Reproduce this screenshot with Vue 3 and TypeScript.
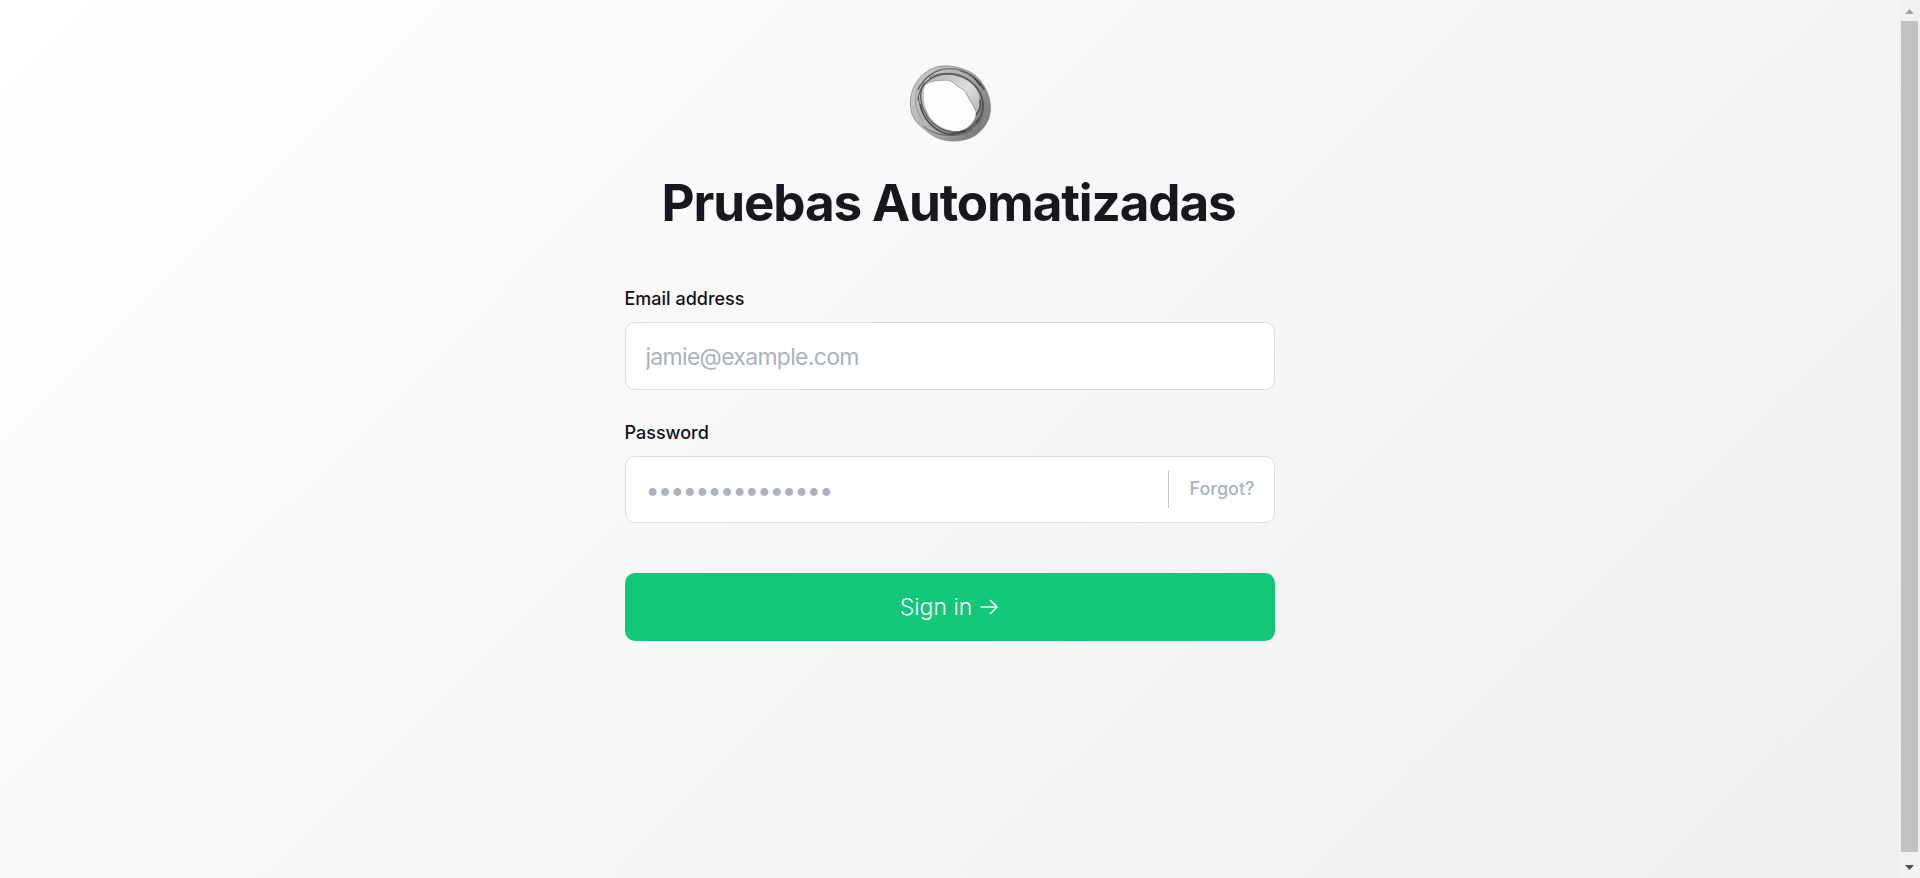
<script setup lang="ts">
import { ref } from 'vue'

const title = 'Pruebas Automatizadas'
const email = ref('')
const password = ref('')
const mask = '•'.repeat(15)
</script>

<template>
  <div class="screen">
    <main class="page">
      <svg class="logo" viewBox="0 0 360 330" aria-hidden="true">
        <defs>
          <linearGradient id="ringShade" x1="0" y1="0" x2="1" y2="0.6">
            <stop offset="0" stop-color="#cecece" />
            <stop offset="0.5" stop-color="#b4b4b4" />
            <stop offset="1" stop-color="#7c7c7c" />
          </linearGradient>
          <linearGradient id="veilShade" x1="0" y1="0" x2="1" y2="1">
            <stop offset="0" stop-color="#b4b4b4" />
            <stop offset="0.55" stop-color="#dedede" />
            <stop offset="1" stop-color="#b4b4b4" />
          </linearGradient>
        </defs>
        <path fill="url(#ringShade)" d="M150 49C180 44 212 53 236 64C262 77 276 94 287 118C298 136 303 162 301 184C298 216 278 242 253 258C231 271 203 275 175 272C147 269 126 258 106 240C86 226 67 206 63 181C58 155 62 125 76 103C92 74 118 54 150 49Z" />
        <path fill="url(#veilShade)" d="M112 94C135 71 178 67 215 80C249 94 267 123 270 151C272 168 267 180 258 190Z" />
        <path fill="#fdfdfd" d="M108 103C96 128 100 163 113 188C119 203 126 212 140 222C156 236 178 243 198 243C220 244 240 230 252 209C259 197 259 188 254 177C245 159 236 147 230 134C224 119 214 116 202 108C191 99 186 92 170 91C148 90 120 91 108 103Z" />
        <g fill="none" stroke-linecap="round">
          <path stroke="#7c7c7c" stroke-width="2" d="M150 49C180 44 212 53 236 64C262 77 276 94 287 118C298 136 303 162 301 184C298 216 278 242 253 258C231 271 203 275 175 272C147 269 126 258 106 240C86 226 67 206 63 181C58 155 62 125 76 103C92 74 118 54 150 49Z" />
          <path stroke="#404040" stroke-width="4" opacity=".8" d="M84 119C102 83 134 59 172 56C214 54 252 75 270 106" />
          <path stroke="#404040" stroke-width="4" opacity=".75" d="M84 150C86 104 127 73 171 72C219 72 253 98 271 129C283 159 278 192 260 219" />
          <path stroke="#484848" stroke-width="3" opacity=".75" d="M118 83C157 62 207 66 239 91C268 115 285 147 280 182C275 213 252 238 219 247" />
          <path stroke="#404040" stroke-width="4" opacity=".75" d="M103 99C87 126 91 158 103 184C118 218 151 243 189 247C221 249 249 233 265 206" />
          <path stroke="#363636" stroke-width="5" opacity=".75" d="M91 164C97 204 130 239 166 250C180 255 207 252 224 244M210 61C240 69 265 89 282 118M270 150C273 166 270 181 259 193" />
          <path stroke="#444444" stroke-width="3" opacity=".7" d="M86 144C90 186 112 220 143 239M101 229C129 252 166 260 202 255C218 254 232 249 246 239" />
          <path stroke="#929292" stroke-width="4" opacity=".6" d="M88 104C70 137 74 178 98 211M287 127C300 160 295 198 274 229M150 60C188 51 224 60 251 84" />
          <path stroke="#656565" stroke-width="2" opacity=".8" d="M110 102C125 91 154 90 175 91C189 94 192 100 202 108C212 116 224 117 230 133C239 151 251 164 257 181" />
        </g>
      </svg>
      <h1>{{ title }}</h1>
      <form @submit.prevent>
        <label for="email">Email address</label>
        <div class="field">
          <input id="email" v-model="email" type="email" placeholder="jamie@example.com" />
        </div>
        <label for="password">Password</label>
        <div class="field secret">
          <input id="password" v-model="password" type="password" :placeholder="mask" />
          <a class="forgot">Forgot?</a>
        </div>
        <button type="submit">
          <span>Sign in</span>
          <svg viewBox="0 0 18 16" aria-hidden="true"><path d="M.5 8H17M10 1l7 7-7 7" /></svg>
        </button>
      </form>
    </main>
    <aside class="scrollbar" aria-hidden="true">
      <svg viewBox="0 0 21 21"><path fill="#a3a3a3" d="M6 14 10.5 9 15 14Z" /></svg>
      <div class="thumb"></div>
      <svg viewBox="0 0 21 26"><path fill="#505050" d="M6 13h9l-4.500 5Z" /></svg>
    </aside>
  </div>
</template>

<style>
body { margin: 0; overflow: hidden; }
</style>

<style scoped>
.screen { display: flex; height: 878px; font-family: Inter, "Liberation Sans", sans-serif; color: #16181d; }
.page { flex: 1; display: flex; flex-direction: column; align-items: center; padding-top: 50px; box-sizing: border-box; background: linear-gradient(135deg, #fff, #eee); }
.logo { width: 120px; height: 110px; flex: none; }
h1 { margin: 9px 2px 0 0; font-size: 51.2px; line-height: 66px; font-weight: 700; letter-spacing: -1.15px; white-space: nowrap; }
form { width: 650px; margin-top: 51px; display: flex; flex-direction: column; }
label { font-size: 18px; line-height: 26px; font-weight: 500; color: #111318; }
.field { box-sizing: border-box; height: 68px; margin: 10px 0 30px; display: flex; align-items: center; background: #fff; border: 1px solid #dcdddf; border-radius: 10px; }
.secret { height: 67px; margin-bottom: 50px; }
input { flex: 1; min-width: 0; height: 100%; box-sizing: border-box; padding: 2px 20px 0; border: 0; outline: 0; background: transparent; font: 400 23px Inter, sans-serif; letter-spacing: -.7px; }
input::placeholder { color: #a9b2be; opacity: 1; }
#password { padding: 0 0 0 20px; font-size: 25px; letter-spacing: -1.65px; }
.forgot { display: flex; align-items: center; box-sizing: border-box; width: 106px; height: 37px; padding-left: 21px; padding-bottom: 2px; border-left: 1px solid #c5c5c5; font-size: 18px; font-weight: 500; color: #a9b2be; }
button { display: flex; align-items: center; justify-content: center; gap: 8px; height: 68px; padding: 0 1px 0 0; border: 0; border-radius: 10px; background: #11c77a; color: #fff; font: 300 23px Inter, sans-serif; }
button svg { width: 18px; height: 16px; fill: none; stroke: #fff; stroke-width: 1.7; }
.scrollbar { width: 21px; display: flex; flex-direction: column; background: #f1f1f1; }
.scrollbar svg { width: 21px; flex: none; }
.thumb { flex: 1; margin: 0 2px; background: #c1c1c1; }
</style>
